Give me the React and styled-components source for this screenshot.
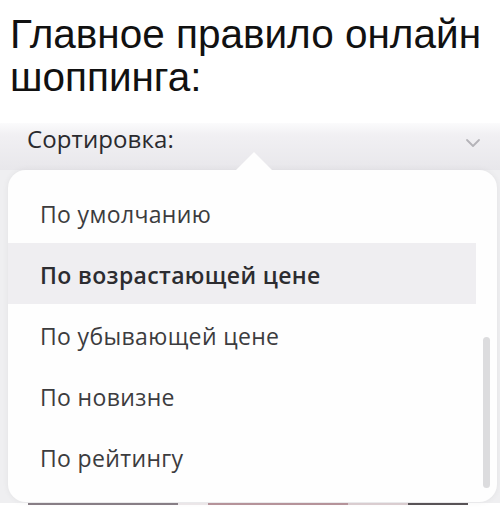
import React from "react";
import styled, { createGlobalStyle } from "styled-components";

const Global = createGlobalStyle`
  html, body { margin: 0; padding: 0; background: #ffffff; }
  body { width: 500px; height: 514px; overflow: hidden; }
`;

const Page = styled.div`
  width: 500px;
  height: 514px;
  display: flex;
  flex-direction: column;
  background: #ffffff;
`;

const Title = styled.h1`
  margin: 0;
  padding: 13px 0 0 10px;
  height: 123px;
  flex: none;
  box-sizing: border-box;
  font-family: "Liberation Sans", Arial, sans-serif;
  font-weight: 400;
  font-size: 40.5px;
  line-height: 43px;
  color: #111111;
`;

const Screen = styled.div`
  position: relative;
  flex: 1;
  display: flex;
  flex-direction: column;
`;

const SortBar = styled.div`
  height: 47px;
  display: flex;
  align-items: flex-start;
  justify-content: space-between;
  padding: 1px 19px 0 27px;
  box-sizing: border-box;
  background: linear-gradient(180deg, #fbfbfc 0%, #f1f0f3 25%, #e8e7eb 100%);
`;

const SortLabel = styled.span`
  font-family: "Open Sans", "Noto Sans", sans-serif;
  font-size: 24px;
  line-height: 30px;
  letter-spacing: 0.1px;
  color: #2a2a2e;
`;

const Listing = styled.div`
  flex: 1;
  display: flex;
  flex-direction: column;
  justify-content: flex-end;
  background: #efeff1;
`;

const Strip = styled.div`
  height: 11px;
  display: flex;
  align-items: flex-start;
  background: #ffffff;
  padding-left: 28px;
`;

const Tile = styled.div`
  height: 2px;
  width: ${(p) => p.$w}px;
  background: ${(p) => p.$c};
`;

const Menu = styled.div`
  position: absolute;
  left: 8px;
  top: 47px;
  width: 489px;
  height: 332px;
  background: #fefefe;
  border-radius: 18px;
  box-shadow: 0 0 6px rgba(0, 0, 0, 0.06);
  display: flex;
  padding: 12px 0 0 0;
  box-sizing: border-box;
`;

const Caret = styled.div`
  position: absolute;
  top: -18px;
  left: 228px;
  width: 0;
  height: 0;
  border-left: 18px solid transparent;
  border-right: 18px solid transparent;
  border-bottom: 18px solid #fefefe;
`;

const List = styled.ul`
  list-style: none;
  margin: 0;
  padding: 0;
  width: 468px;
  display: flex;
  flex-direction: column;
`;

const Item = styled.li`
  height: 61px;
  box-sizing: border-box;
  display: flex;
  align-items: center;
  padding: 3px 0 0 32px;
  font-family: "Open Sans", "Noto Sans", sans-serif;
  font-size: 23px;
  letter-spacing: 0.35px;
  font-weight: ${(p) => (p.$active ? 600 : 400)};
  color: ${(p) => (p.$active ? "#2c2c30" : "#3c3c3e")};
  background: ${(p) => (p.$active ? "#efeef1" : "transparent")};
`;

const Track = styled.div`
  flex: 1;
  display: flex;
  justify-content: center;
  padding-top: 155px;
`;

const Thumb = styled.div`
  width: 7px;
  height: 151px;
  border-radius: 4px;
  background: #dcdcde;
`;

const Chevron = () => (
  <svg width="16" height="10" viewBox="0 0 16 10" style={{ marginTop: 14 }}>
    <path d="M2 2 L8 8 L14 2" fill="none" stroke="#b4b3b8" strokeWidth="1.8" strokeLinecap="round" strokeLinejoin="round" />
  </svg>
);

const options = [
  "По умолчанию",
  "По возрастающей цене",
  "По убывающей цене",
  "По новизне",
  "По рейтингу",
];

export default function App() {
  return (
    <>
      <Global />
      <Page>
        <Title>
          Главное правило онлайн
          <br />
          шоппинга:
        </Title>
        <Screen>
          <SortBar>
            <SortLabel>Сортировка:</SortLabel>
            <Chevron />
          </SortBar>
          <Listing>
            <Strip>
              <Tile $w={150} $c="#8a8088" />
              <Tile $w={30} $c="#efeaec" />
              <Tile $w={140} $c="#b8959c" />
              <Tile $w={60} $c="#ddd0d3" />
              <Tile $w={60} $c="#5a5458" />
            </Strip>
          </Listing>
          <Menu>
            <Caret />
            <List>
              {options.map((o, i) => (
                <Item key={o} $active={i === 1}>
                  {o}
                </Item>
              ))}
            </List>
            <Track>
              <Thumb />
            </Track>
          </Menu>
        </Screen>
      </Page>
    </>
  );
}
